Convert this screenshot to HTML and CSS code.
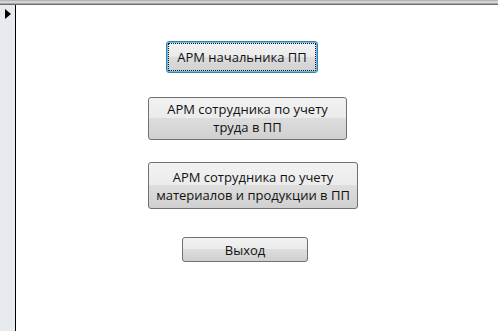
FILE: index.html
```html
<!DOCTYPE html>
<html lang="ru">
<head>
	<meta charset="UTF-8">
	<title>Главная форма</title>
	<link rel="stylesheet" href="styles.css">
</head>
<body>
<div class="titlebar"></div>
<div class="form">
	<div class="selector"><div class="arrow"></div></div>
	<div class="detail">
		<button class="cmd cmd-chief focused">АРМ начальника ПП</button>
		<button class="cmd cmd-labor">АРМ сотрудника по учету<br>труда в ПП</button>
		<button class="cmd cmd-goods">АРМ сотрудника по учету<br>материалов и продукции в ПП</button>
		<button class="cmd cmd-exit">Выход</button>
	</div>
</div>
</body>
</html>
```
FILE: styles.css
```css
:root {
	--selector-bg: #e7eaee;
	--btn-border: #707070;
	--btn-text: #111;
}

html, body {
	margin: 0;
	height: 100%;
	background: #fff;
	font-family: "Open Sans", "Noto Sans", sans-serif;
}

body {
	display: flex;
	flex-direction: column;
}

/* thin grey bar along the top of the form */
.titlebar {
	height: 5px;
	background: linear-gradient(#9d9fa2 0, #c9cbcd 1px, #dadcde 3px, #6c6d6f 4px, #6c6d6f 5px);
}

.form {
	flex: 1;
	display: flex;
}

.selector {
	width: 15px;
	background: var(--selector-bg);
	border-right: 1px solid #000;
}

.arrow {
	margin: 4px 0 0 5px;
	width: 0;
	height: 0;
	border-top: 5px solid transparent;
	border-bottom: 5px solid transparent;
	border-left: 6px solid #000;
}

.detail {
	flex: 1;
	display: flex;
	flex-direction: column;
	align-items: flex-start;
	padding-top: 36px;
}

.cmd {
	box-sizing: border-box;
	padding: 0;
	border: 1px solid var(--btn-border);
	border-radius: 3px;
	background: linear-gradient(#f2f2f2 0%, #ebebeb 48%, #dddddd 50%, #d0d0d0 100%);
	color: var(--btn-text);
	font-family: inherit;
	font-size: 13px;
	line-height: 18px;
	text-align: center;
}

.cmd.focused {
	border-color: #3c7fb1;
	box-shadow: inset 0 0 0 1px #61c0ee;
	outline: 1px dotted #111;
	outline-offset: -3px;
}

.cmd-chief {
	margin-left: 150px;
	width: 152px;
	height: 32px;
}

.cmd-labor {
	margin: 24px 0 0 132px;
	width: 199px;
	height: 43px;
	padding-bottom: 2px;
}

.cmd-goods {
	margin: 22px 0 0 132px;
	width: 210px;
	height: 47px;
}

.cmd-exit {
	margin: 28px 0 0 166px;
	width: 126px;
	height: 25px;
}
```
